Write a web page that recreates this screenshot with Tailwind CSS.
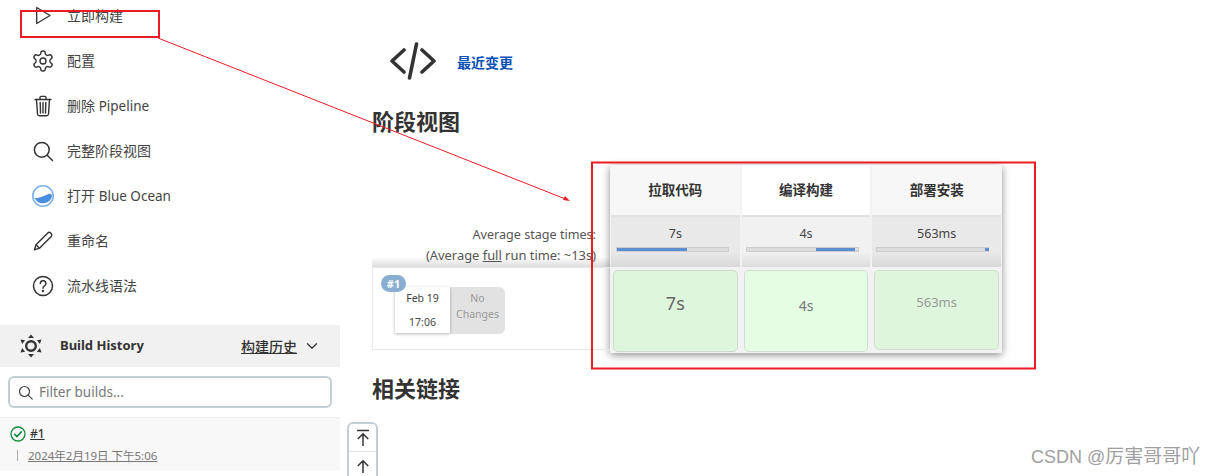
<!DOCTYPE html>
<html lang="zh-CN">
<head>
  <meta charset="UTF-8">
  <title>Pipeline</title>
  <script src="https://cdn.jsdelivr.net/npm/@tailwindcss/browser@4"></script>
</head>
<body class="bg-white">
<div class="relative w-[1218px] h-[476px] overflow-hidden flex font-['Noto_Sans','Noto_Sans_CJK_SC',sans-serif] text-[14px] text-[#333]">

  <!-- sidebar -->
  <aside class="w-[340px] shrink-0 flex flex-col">
    <nav class="-mt-[7px] flex flex-col text-[#444]">
      <a class="h-[45px] flex items-center gap-3 pl-[31px]">
        <svg class="w-6 h-6" viewBox="0 0 24 24" fill="none" stroke="#333" stroke-width="1.3" stroke-linejoin="round"><path d="M5.7 3.5v16L19 11.5z"/></svg>
        <span>立即构建</span>
      </a>
      <a class="h-[45px] flex items-center gap-3 pl-[31px]">
        <svg class="w-6 h-6" viewBox="0 0 24 24" fill="none" stroke="#333" stroke-width="1.4"><path d="M12.22 2h-.44a2 2 0 0 0-2 2v.18a2 2 0 0 1-1 1.73l-.43.25a2 2 0 0 1-2 0l-.15-.08a2 2 0 0 0-2.73.73l-.22.38a2 2 0 0 0 .73 2.73l.15.1a2 2 0 0 1 1 1.72v.51a2 2 0 0 1-1 1.74l-.15.09a2 2 0 0 0-.73 2.73l.22.38a2 2 0 0 0 2.73.73l.15-.08a2 2 0 0 1 2 0l.43.25a2 2 0 0 1 1 1.73V20a2 2 0 0 0 2 2h.44a2 2 0 0 0 2-2v-.18a2 2 0 0 1 1-1.73l.43-.25a2 2 0 0 1 2 0l.15.08a2 2 0 0 0 2.73-.73l.22-.39a2 2 0 0 0-.73-2.73l-.15-.08a2 2 0 0 1-1-1.74v-.5a2 2 0 0 1 1-1.74l.15-.09a2 2 0 0 0 .73-2.73l-.22-.38a2 2 0 0 0-2.73-.73l-.15.08a2 2 0 0 1-2 0l-.43-.25a2 2 0 0 1-1-1.73V4a2 2 0 0 0-2-2z"/><circle cx="12" cy="12" r="3"/></svg>
        <span>配置</span>
      </a>
      <a class="h-[45px] flex items-center gap-3 pl-[31px]">
        <svg class="w-6 h-6" viewBox="0 0 24 24" fill="none" stroke="#333" stroke-width="1.4" stroke-linecap="round" stroke-linejoin="round"><path d="M5.5 5.5l1 14.5a2 2 0 0 0 2 1.8h7a2 2 0 0 0 2-1.8l1-14.5"/><path d="M4 5.5h16"/><path d="M9 5.5V3.4a1 1 0 0 1 1-1h4a1 1 0 0 1 1 1v2.1"/><path d="M9.2 8.5l.3 10.5M12 8.5V19M14.8 8.5L14.5 19"/></svg>
        <span>删除 <span class="text-[13.5px]">Pipeline</span></span>
      </a>
      <a class="h-[45px] flex items-center gap-3 pl-[31px]">
        <svg class="w-6 h-6" viewBox="0 0 24 24" fill="none" stroke="#333" stroke-width="1.5" stroke-linecap="round"><circle cx="10.8" cy="10.8" r="7.4"/><path d="M16.2 16.2l5.3 5.3"/></svg>
        <span>完整阶段视图</span>
      </a>
      <a class="h-[45px] flex items-center gap-3 pl-[31px]">
        <svg class="w-6 h-6" viewBox="0 0 24 24"><circle cx="12" cy="12" r="10.2" fill="#fff" stroke="#7db1ea" stroke-width="1.6"/><path d="M3.6 14c2.600.6 4.800-.6 7.400-1.200s4.600-2.400 7-3c1.800-.4 3 .6 3 2.400A9.300 9.300 0 0 1 3.600 14z" fill="#4a8fdf"/></svg>
        <span>打开 <span class="text-[13.5px]">Blue Ocean</span></span>
      </a>
      <a class="h-[45px] flex items-center gap-3 pl-[31px]">
        <svg class="w-6 h-6" viewBox="0 0 24 24" fill="none" stroke="#333" stroke-width="1.4" stroke-linejoin="round"><path d="M3.500 20.800l1.500-5L16.800 4a2 2 0 0 1 2.800 0l.6.600a2 2 0 0 1 0 2.800L8.500 19.200z"/><path d="M5 15.800l3.500 3.400"/></svg>
        <span>重命名</span>
      </a>
      <a class="h-[45px] flex items-center gap-3 pl-[31px]">
        <svg class="w-6 h-6" viewBox="0 0 24 24" fill="none" stroke="#333" stroke-width="1.5" stroke-linecap="round"><circle cx="12" cy="12" r="9.500"/><path d="M9.300 9.400a2.800 2.800 0 1 1 4.300 2.400c-1 .6-1.600 1.200-1.600 2.400"/><circle cx="12" cy="17" r=".5" fill="#333"/></svg>
        <span>流水线语法</span>
      </a>
    </nav>

    <div class="mt-[17px] h-[42px] bg-[#f1f1f1] flex items-center pl-[20px] pr-[22px]">
      <svg class="w-[22px] h-[24px]" viewBox="0 0 22 24"><circle cx="11" cy="12" r="4.800" fill="none" stroke="#333" stroke-width="2.400"/><path d="M11 .5l3 3.500h-6zM11 23.500l3-3.500h-6zM.5 5.500l4.600.8-3 3.700zM21.500 5.500l-4.600.8 3 3.700zM.5 18.500l4.600-.8-3-3.700zM21.500 18.500l-4.600-.8 3-3.700z" fill="#333"/></svg>
      <span class="ml-[18px] font-bold text-[13px]">Build History</span>
      <span class="ml-auto underline font-medium">构建历史</span>
      <svg class="ml-[9px] w-3 h-3" viewBox="0 0 12 12" fill="none" stroke="#333" stroke-width="1.300" stroke-linecap="round" stroke-linejoin="round"><path d="M1.500 3.800L6 8.300l4.500-4.500"/></svg>
    </div>

    <div class="mt-[9px] mx-[8px] h-[32px] border-2 border-[#c3cfd2] rounded-[6px] flex items-center pl-[8px] gap-[6px]">
      <svg class="w-[15px] h-[15px]" viewBox="0 0 15 15" fill="none" stroke="#444" stroke-width="1.200" stroke-linecap="round"><circle cx="6.500" cy="6.500" r="5"/><path d="M10.200 10.200l4 4"/></svg>
      <span class="text-[#777] text-[13.500px]">Filter builds...</span>
    </div>

    <div class="mt-[9px] h-[54px] bg-[#f8f8f8] border-t border-[#eee] relative">
      <div class="flex items-center pl-[10px] pt-[7px]">
        <svg class="w-[16px] h-[16px]" viewBox="0 0 16 16" fill="none" stroke="#138a3c" stroke-width="1.300" stroke-linecap="round" stroke-linejoin="round"><circle cx="8" cy="8" r="7"/><path d="M4.600 8.300l2.300 2.300 4.500-4.700" stroke-width="1.600"/></svg>
        <span class="ml-[4px] underline text-[12px] font-medium">#1</span>
      </div>
      <div class="flex items-center pl-[17px] mt-[4px]">
        <span class="w-px h-[11px] bg-[#aaa]"></span>
        <span class="ml-[10px] underline text-[11.5px] text-[#777]">2024年2月19日 下午5:06</span>
      </div>
    </div>
  </aside>

  <!-- main -->
  <main class="flex-1 pl-[32px] pt-[40px]">
    <div class="h-[42px] flex items-center pl-[17px]">
      <svg class="w-[48px] h-[38px]" viewBox="0 0 48 38" fill="none" stroke="#333" stroke-width="3.600" stroke-linecap="round" stroke-linejoin="round"><path d="M15 8L3 19l12 11M33 8l12 11-12 11M27.500 2L20.500 36"/></svg>
      <a class="ml-[20px] mt-[2px] text-[#0b50b5] font-bold">最近变更</a>
    </div>
    <h2 class="mt-[24px] h-[30px] leading-[30px] text-[22px] font-bold">阶段视图</h2>

    <div class="mt-[29px] flex h-[188px]">
      <div class="w-[238px] shrink-0 flex flex-col">
        <div class="h-[102px] flex flex-col justify-end bg-gradient-to-b from-white from-90% to-[#ddd] pr-[14px] pb-[1px] text-right text-[12.6px] leading-[21px] text-[#555]">
          <p>Average stage times:</p>
          <p class="text-[12.9px]">(Average <span class="underline">full</span> run time: ~13s)</p>
        </div>
        <div class="relative h-[83px] border-l border-b border-t border-[#e8e8e8]">
          <span class="absolute left-[8px] top-[7px] w-[25px] h-[17px] rounded-full bg-[#8aaed2] text-white text-[11px] leading-[17px] text-center font-bold z-10">#1</span>
          <div class="ml-[22px] mt-[19px] flex">
            <div class="w-[55px] h-[46px] bg-white shadow-[0_1px_3px_rgba(0,0,0,0.3)] flex flex-col items-center justify-between pt-[4px] pb-[2px] text-[10.500px] text-[#444] relative">
              <span>Feb 19</span>
              <span>17:06</span>
            </div>
            <div class="w-[55px] h-[47px] bg-[#e2e2e2] rounded-r-[6px] flex flex-col items-center justify-center pb-[9px] text-[10.5px] leading-[16px] text-[#999]">
              <span>No</span>
              <span>Changes</span>
            </div>
          </div>
        </div>
      </div>

      <div class="w-[392px] h-[188px] shadow-[0_2px_8px_rgba(0,0,0,0.45)] bg-[#f2f2f2] grid grid-cols-3 grid-rows-[50px_52px_86px] px-[1px] gap-x-[2px] text-[#444]">
        <div class="bg-[#f7f7f7] flex items-center justify-center font-semibold text-[13.500px] text-[#333]">拉取代码</div>
        <div class="bg-white flex items-center justify-center font-semibold text-[13.500px] text-[#333]">编译构建</div>
        <div class="bg-[#f7f7f7] flex items-center justify-center font-semibold text-[13.500px] text-[#333]">部署安装</div>

        <div class="border-t-2 border-[#e2e2e2] bg-gradient-to-b from-[#e9e9e9] from-70% to-[#d8d8d8] flex flex-col items-center pt-[8px] text-[12.500px]">
          <span class="h-[18px] leading-[18px]">7s</span>
          <div class="mt-[4px] ml-[5px] self-start w-[113px] h-[5px] bg-[#dcdcdc] border border-[#ccc]"><div class="w-[70px] h-full bg-[#5c8ed0]"></div></div>
        </div>
        <div class="border-t-2 border-[#e2e2e2] bg-gradient-to-b from-[#f1f1f1] from-70% to-[#dcdcdc] flex flex-col items-center pt-[8px] text-[12.500px]">
          <span class="h-[18px] leading-[18px]">4s</span>
          <div class="mt-[4px] ml-[4px] self-start w-[113px] h-[5px] bg-[#dcdcdc] border border-[#ccc] pl-[69px]"><div class="w-[39px] h-full bg-[#5c8ed0]"></div></div>
        </div>
        <div class="border-t-2 border-[#e2e2e2] bg-gradient-to-b from-[#e9e9e9] from-70% to-[#d8d8d8] flex flex-col items-center pt-[8px] text-[12.500px]">
          <span class="h-[18px] leading-[18px]">563ms</span>
          <div class="mt-[4px] ml-[4px] self-start w-[113px] h-[5px] bg-[#dcdcdc] border border-[#ccc] pl-[108px]"><div class="w-[4px] h-full bg-[#5c8ed0]"></div></div>
        </div>

        <div class="p-[2px] pt-[3px]">
          <div class="h-[82px] rounded-[5px] bg-[#def7dc] border border-[#cfd9cd] flex items-center justify-center pb-[16px] text-[18px] text-[#666]">7s</div>
        </div>
        <div class="p-[2px] pt-[3px]">
          <div class="h-[82px] rounded-[5px] bg-[#e5fee3] border border-[#d3ddd1] flex items-center justify-center pb-[12px] text-[14px] text-[#777]">4s</div>
        </div>
        <div class="p-[2px] pt-[3px]">
          <div class="h-[80px] rounded-[5px] bg-[#def7dc] border border-[#d3ddd1] flex items-center justify-center pb-[14px] text-[13px] text-[#999]">563ms</div>
        </div>
      </div>
    </div>

    <h2 class="mt-[20px] h-[30px] leading-[30px] text-[22px] font-bold">相关链接</h2>
  </main>

  <!-- floating scroll buttons -->
  <div class="absolute left-[347px] top-[422px] w-[31px] h-[70px] border-2 border-[#c3cfd2] rounded-[6px] bg-white">
    <div class="h-[28px] border-b border-[#e5e5e5] flex items-center justify-center">
      <svg class="w-[14px] h-[18px]" viewBox="0 0 14 18" fill="none" stroke="#333" stroke-width="1.500"><path d="M1 1.500h12M7 17V5M1.800 10L7 4.800 12.200 10"/></svg>
    </div>
    <div class="h-[28px] flex items-center justify-center">
      <svg class="w-[14px] h-[14px]" viewBox="0 0 14 14" fill="none" stroke="#333" stroke-width="1.500"><path d="M7 14V2M1.800 7L7 1.800 12.200 7"/></svg>
    </div>
  </div>

  <!-- annotation marks -->
  <svg class="absolute inset-0 w-[1218px] h-[476px] pointer-events-none" viewBox="0 0 1218 476" fill="none">
    <rect x="21" y="11" width="138" height="26" stroke="#ec1c24" stroke-width="2"/>
    <rect x="592" y="162.500" width="443" height="206" stroke="#ec1c24" stroke-width="2"/>
    <path d="M158 38L568 200" stroke="#ec1c24" stroke-width="1"/>
    <path d="M570 201l-7-1 2-4z" fill="#ec1c24"/>
  </svg>

  <span class="absolute left-[1031px] top-[446px] text-[18px] leading-[22px] text-[#a0a0a0] font-['Liberation_Sans','Noto_Sans_CJK_SC',sans-serif]">CSDN @<span class="text-[19px]">厉害哥哥吖</span></span>
</div>
</body>
</html>
